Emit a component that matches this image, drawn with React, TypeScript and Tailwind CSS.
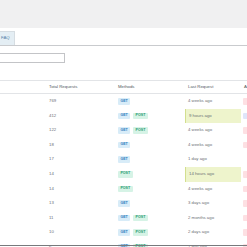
type Row = {
  total: string;
  methods: string[];
  last: string;
  hl?: boolean;
  status?: "pink" | "blue" | "none";
};

const rows: Row[] = [
  { total: "769", methods: ["GET"], last: "4 weeks ago", status: "pink" },
  { total: "412", methods: ["GET", "POST"], last: "9 hours ago", hl: true, status: "blue" },
  { total: "122", methods: ["GET", "POST"], last: "4 weeks ago", status: "pink" },
  { total: "18", methods: ["GET"], last: "4 weeks ago", status: "pink" },
  { total: "17", methods: ["GET"], last: "1 day ago", status: "none" },
  { total: "14", methods: ["POST"], last: "14 hours ago", hl: true, status: "pink" },
  { total: "14", methods: ["POST"], last: "4 weeks ago", status: "pink" },
  { total: "13", methods: ["GET"], last: "3 days ago", status: "pink" },
  { total: "11", methods: ["GET", "POST"], last: "2 months ago", status: "pink" },
  { total: "10", methods: ["GET", "POST"], last: "2 days ago", status: "pink" },
  { total: "6", methods: ["GET", "POST"], last: "1 day ago", status: "pink" },
];

function Badge({ m }: { m: string }) {
  if (m === "GET") {
    return (
      <span className="inline-flex items-center h-[6.5px] px-[2.4px] rounded-[1px] bg-[#d8ecf8] text-[#2f7fc0] text-[3.6px] font-semibold leading-none">
        GET
      </span>
    );
  }
  return (
    <span className="inline-flex items-center h-[6.5px] px-[2.4px] rounded-[1px] bg-[#d6f3e6] text-[#2a9c72] text-[3.6px] font-semibold leading-none">
      POST
    </span>
  );
}

export default function App() {
  return (
    <div className="relative w-[247px] h-[247px] overflow-hidden bg-white font-['Liberation_Sans',Arial,sans-serif] text-[4.3px] text-[#6b7075]">
      <div className="h-[28px] bg-[#f0f0f1]" />
      <div className="flex pt-[3px] border-b border-[#c9cbce]">
        <div className="-ml-[3px] h-[14px] px-[4px] flex items-center bg-[#e4eef4] border-t border-r border-[#d6dde2] text-[#4f7fa8] text-[4.3px]">
          FAQ
        </div>
      </div>
      <div className="mt-[7px] -ml-[6px] w-[71px] h-[10px] border border-[#c3c4c7] bg-white" />
      <div className="mt-[17px] grid grid-cols-[46px_69px_70px_56px_60px] h-[14px] items-center border-y border-[#e2e4e7] text-[#50575e]">
        <div />
        <div className="pl-[3px]">Total Requests</div>
        <div className="pl-[3px]">Methods</div>
        <div className="pl-[3px]">Last Request</div>
        <div className="pl-[3px]">Auth</div>
      </div>
      {rows.map((r, i) => (
        <div key={i} className="grid grid-cols-[46px_69px_70px_56px_60px] h-[14.6px] items-stretch">
          <div />
          <div className="pl-[3px] flex items-center">{r.total}</div>
          <div className="pl-[3px] flex items-center gap-[3px]">
            {r.methods.map((m) => (
              <Badge key={m} m={m} />
            ))}
          </div>
          <div
            className={
              r.hl
                ? "pl-[3px] flex items-center bg-[#eef4cc] border-l border-[#d3df8f]"
                : "pl-[3px] flex items-center"
            }
          >
            {r.last}
          </div>
          <div className="pl-[2px] flex items-center">
            {r.status === "pink" && <span className="h-[6.5px] w-[12px] bg-[#fde0e3] rounded-[1px]" />}
            {r.status === "blue" && <span className="h-[6.5px] w-[12px] bg-[#e0e6fa] rounded-[1px]" />}
          </div>
        </div>
      ))}
      <div className="absolute left-0 right-0 top-[245px] h-px bg-[#77797c]" />
    </div>
  );
}
